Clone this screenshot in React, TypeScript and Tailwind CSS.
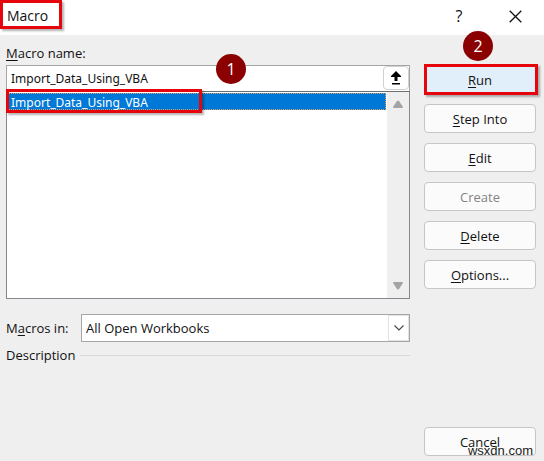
import React, { useState } from 'react'

const MACROS = ['Import_Data_Using_VBA']

export default function MacroDialog() {
  const [name, setName] = useState(MACROS[0])

  return (
    <main
      role="dialog"
      aria-labelledby="dialog-title"
      className="flex min-h-screen flex-col bg-[#efefef] font-['Open_Sans','Noto_Sans',sans-serif] text-[13px] leading-4 text-[#111]"
    >
      <header className="flex h-[35px] items-start justify-between bg-white pr-[22px]">
        <h1
          id="dialog-title"
          className="h-[29px] w-[62px] border-[3px] border-[#e6050c] pl-1 text-[14px] leading-[26px] shadow-[2px_2px_2px_rgba(0,0,0,0.3)]"
        >
          Macro
        </h1>
        <div className="flex h-8 items-center gap-[44px]">
          <button type="button" aria-label="Help" className="w-3 text-center text-[16px]">
            ?
          </button>
          <button type="button" aria-label="Close">
            <svg width="13" height="13" viewBox="0 0 13 13" fill="none" stroke="#111" strokeWidth="1.3">
              <path d="M.7.7l11.6 11.6M12.3.7L.7 12.3" />
            </svg>
          </button>
        </div>
      </header>

      <div className="flex flex-1 gap-[14px] pr-2 pb-[5px] pl-[6px]">
        <section className="flex min-w-0 flex-1 flex-col pt-[10px]">
          <label htmlFor="macro-name" className="mb-1">
            <Key>M</Key>acro name:
          </label>

          <div className="relative flex h-[26px] border border-b-0 border-[#a5a5a5] bg-white">
            <input
              id="macro-name"
              value={name}
              onChange={(e) => setName(e.target.value)}
              className="min-w-0 flex-1 pl-1 font-['Noto_Sans',sans-serif] text-[12px] outline-none"
            />
            <button
              type="button"
              aria-label="Collapse dialog"
              className="flex h-6 w-[26px] items-center justify-center rounded-[4px] border border-[#d0d0d0] bg-white"
            >
              <svg width="10" height="14" viewBox="0 0 10 14" fill="#000">
                <path d="M5 0L10 5V6H6.500V10H3.500V6H0V5zM1 12H9V13.500H1z" />
              </svg>
            </button>
            <Badge className="-top-[12px] left-[209px]">1</Badge>
          </div>

          <div className="flex h-[208px] border border-[#828790] border-t-[#6f6f6f] bg-white">
            <ul role="listbox" aria-label="Macros" className="min-w-0 flex-1 pt-px">
              {MACROS.map((macro) => (
                <li
                  key={macro}
                  role="option"
                  aria-selected={macro === name}
                  onClick={() => setName(macro)}
                  className="relative mr-px h-[17px] border border-dotted border-[#d9a066] bg-[#0078d7] pl-[3px] font-['Noto_Sans',sans-serif] text-[12px] leading-[17px] text-white"
                >
                  {macro}
                  <span className="absolute -top-[5px] -left-[2px] h-[24px] w-[196px] border-[3px] border-[#e6050c] shadow-[2px_2px_2px_rgba(0,0,0,0.3)]" />
                </li>
              ))}
            </ul>
            <div className="flex w-[22px] flex-col items-center justify-between bg-[#efefef] py-2">
              <ScrollArrow />
              <ScrollArrow flipped />
            </div>
          </div>

          <div className="mt-[15px] flex items-center">
            <label htmlFor="macros-in" className="w-[75px]">
              M<Key>a</Key>cros in:
            </label>
            <div className="relative min-w-0 flex-1">
              <select
                id="macros-in"
                className="block h-7 w-full appearance-none border border-[#a5a5a5] bg-white pl-1 outline-none"
              >
                <option>All Open Workbooks</option>
                <option>This Workbook</option>
              </select>
              <span className="pointer-events-none absolute inset-y-px right-px flex w-[21px] items-center justify-center border border-[#e2e2e2]">
                <svg width="10" height="6" viewBox="0 0 10 6" fill="none" stroke="#444" strokeWidth="1.1">
                  <path d="M.5.5L5 5L9.500.5" />
                </svg>
              </span>
            </div>
          </div>

          <div className="mt-[5px] flex items-center gap-[5px]">
            <h2>Description</h2>
            <hr className="flex-1 border-[#d9d9d9]" />
          </div>
        </section>

        <aside className="relative flex w-28 flex-col gap-[10px] pt-[30px]">
          <div className="relative">
            <DialogButton className="border-[#e5f1fb] bg-[#e1effa]">
              <Key>R</Key>un
            </DialogButton>
            <span className="pointer-events-none absolute -top-px -right-[2px] -bottom-px left-0 border-[3px] border-[#e6050c] shadow-[2px_2px_2px_rgba(0,0,0,0.3)]" />
          </div>
          <DialogButton>
            <Key>S</Key>tep Into
          </DialogButton>
          <DialogButton>
            <Key>E</Key>dit
          </DialogButton>
          <DialogButton disabled>Create</DialogButton>
          <DialogButton>
            <Key>D</Key>elete
          </DialogButton>
          <DialogButton>
            <Key>O</Key>ptions...
          </DialogButton>
          <div className="relative mt-auto">
            <DialogButton>Cancel</DialogButton>
            <span className="pointer-events-none absolute right-[3px] -bottom-[3px] font-['Liberation_Sans',sans-serif] text-[13px] text-[#222]">
              wsxdn.com
            </span>
          </div>
          <Badge className="-top-[4px] left-[39px]">2</Badge>
        </aside>
      </div>
    </main>
  )
}

function Key({ children }: { children: React.ReactNode }) {
  return <u className="underline-offset-2">{children}</u>
}

function DialogButton({
  children,
  disabled = false,
  className = 'border-[#c6c6c6] bg-[#fbfbfb]',
}: {
  children: React.ReactNode
  disabled?: boolean
  className?: string
}) {
  return (
    <button
      type="button"
      disabled={disabled}
      className={`block h-[29px] w-full shrink-0 rounded-[4px] border pt-px disabled:text-[#838383] ${className}`}
    >
      {children}
    </button>
  )
}

function Badge({ children, className }: { children: React.ReactNode; className: string }) {
  return (
    <span
      className={`absolute flex size-[30px] items-center justify-center rounded-full bg-[#8b0000] text-[16px] text-white ${className}`}
    >
      {children}
    </span>
  )
}

function ScrollArrow({ flipped = false }: { flipped?: boolean }) {
  return (
    <svg width="10" height="8" viewBox="0 0 10 8" fill="#a3a3a3">
      <path d={flipped ? 'M.5 0H9.500L10 1L6 7Q5 8 4 7L0 1z' : 'M.5 8H9.500L10 7L6 1Q5 0 4 1L0 7z'} />
    </svg>
  )
}
